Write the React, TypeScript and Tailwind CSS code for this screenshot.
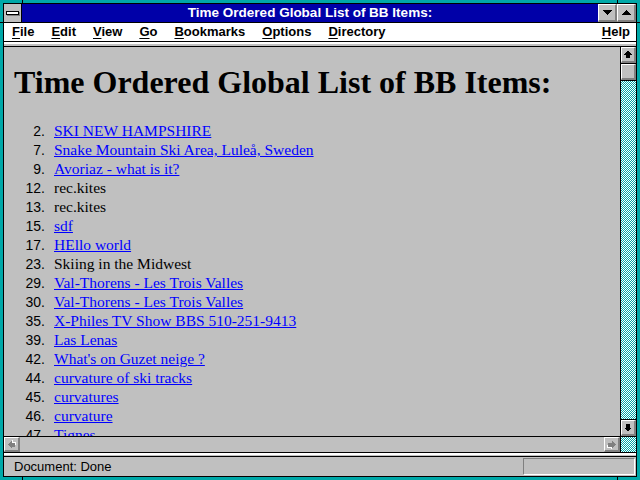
const items: { n: number; text: string; link: boolean }[] = [
  { n: 2, text: "SKI NEW HAMPSHIRE", link: true },
  { n: 7, text: "Snake Mountain Ski Area, Luleå, Sweden", link: true },
  { n: 9, text: "Avoriaz - what is it?", link: true },
  { n: 12, text: "rec.kites", link: false },
  { n: 13, text: "rec.kites", link: false },
  { n: 15, text: "sdf", link: true },
  { n: 17, text: "HEllo world", link: true },
  { n: 23, text: "Skiing in the Midwest", link: false },
  { n: 29, text: "Val-Thorens - Les Trois Valles", link: true },
  { n: 30, text: "Val-Thorens - Les Trois Valles", link: true },
  { n: 35, text: "X-Philes TV Show BBS 510-251-9413", link: true },
  { n: 39, text: "Las Lenas", link: true },
  { n: 42, text: "What's on Guzet neige ?", link: true },
  { n: 44, text: "curvature of ski tracks", link: true },
  { n: 45, text: "curvatures", link: true },
  { n: 46, text: "curvature", link: true },
  { n: 47, text: "Tignes", link: true },
];

const menus = ["File", "Edit", "View", "Go", "Bookmarks", "Options", "Directory"];

const checker =
  "bg-[image:repeating-conic-gradient(#00a8a8_0_25%,#ffffff_0_50%)] bg-[length:2px_2px]";

const bevel =
  "bg-[#c0c0c0] border-t border-l border-t-white border-l-white border-b-2 border-r-2 border-b-[#808080] border-r-[#808080]";

function Arrow({ dir, dim }: { dir: "up" | "down" | "left" | "right"; dim?: boolean }) {
  const rot = { up: 0, right: 90, down: 180, left: 270 }[dir];
  return (
    <svg width="13" height="13" viewBox="0 0 13 13" shapeRendering="crispEdges">
      <g transform={`rotate(${rot} 6.5 6.5)`}>
        {dim && (
          <polygon points="7.5,3.5 11.5,7.5 9.5,7.5 9.5,11 6.5,11 6.5,7.5 4.5,7.5" fill="#ffffff" />
        )}
        <polygon
          points="6.5,2.5 10.5,6.5 8.5,6.5 8.5,10 4.5,10 4.5,6.5 2.5,6.5"
          fill={dim ? "#808080" : "#000000"}
        />
      </g>
    </svg>
  );
}

function Tri({ down }: { down?: boolean }) {
  return (
    <svg width="9" height="5" viewBox="0 0 9 5" shapeRendering="crispEdges">
      <polygon points={down ? "0,0 9,0 4.5,5" : "0,5 9,5 4.5,0"} fill="#000" />
    </svg>
  );
}

export default function App() {
  return (
    <div className="relative w-[640px] h-[480px] bg-[#00a8a8] p-[3px] font-['Liberation_Sans',Arial,sans-serif]">
      {/* frame corner marks */}
      <div className="absolute left-[22px] top-0 w-px h-[3px] bg-black" />
      <div className="absolute right-[22px] top-0 w-px h-[3px] bg-black" />
      <div className="absolute left-[22px] bottom-0 w-px h-[3px] bg-black" />
      <div className="absolute right-[22px] bottom-0 w-px h-[3px] bg-black" />
      <div className="absolute left-0 top-[22px] w-[3px] h-px bg-black" />
      <div className="absolute right-0 top-[22px] w-[3px] h-px bg-black" />

      <div className="flex flex-col h-full border border-black bg-[#c0c0c0]">
        {/* Title bar */}
        <div className="flex h-[19px] border-b border-black shrink-0">
          <div className="w-[18px] border-r border-black bg-[#c0c0c0] flex items-center justify-center">
            <div className="w-[13px] h-[4px] bg-white border border-black shadow-[1px_1px_0_#808080]" />
          </div>
          <div className="flex-1 bg-[#0000a8] text-white font-bold text-[13.5px] leading-[18px] text-center">
            Time Ordered Global List of BB Items:
          </div>
          <div className={`w-[19px] border-l border-black flex items-center justify-center ${bevel}`}>
            <Tri down />
          </div>
          <div className={`w-[19px] border-l border-black flex items-center justify-center ${bevel}`}>
            <Tri />
          </div>
        </div>

        {/* Menu bar */}
        <div className="flex h-[18px] bg-white items-center pl-[8px] pr-[6px] gap-[17px] text-[13px] font-bold text-black shrink-0">
          {menus.map((m) => (
            <span key={m}>
              <span className="underline underline-offset-2">{m[0]}</span>
              {m.slice(1)}
            </span>
          ))}
          <span className="ml-auto">
            <span className="underline underline-offset-2">H</span>elp
          </span>
        </div>

        {/* collapsed toolbar strip */}
        <div className="h-[6px] shrink-0 border-t border-b border-black bg-[#c0c0c0]">
          <div className="h-[2px] bg-white" />
        </div>

        {/* Document area */}
        <div className="flex flex-1 min-h-0">
          <div className="flex-1 overflow-hidden bg-[#c0c0c0] pl-[10px] pt-[19px] font-['Liberation_Serif','Times_New_Roman',serif]">
            <h1 className="text-[32px] leading-[32px] font-bold text-black whitespace-nowrap">
              Time Ordered Global List of BB Items:
            </h1>
            <ol className="mt-[23px]">
              {items.map((it) => (
                <li key={it.n} className="flex items-baseline h-[19px] leading-[19px]">
                  <span className="w-[31px] text-right text-[14px] text-black font-['Liberation_Sans',Arial,sans-serif]">
                    {it.n}.
                  </span>
                  <span
                    className={`ml-[9px] text-[15.5px] whitespace-nowrap ${
                      it.link ? "text-[#0000ff] underline underline-offset-[1px]" : "text-black"
                    }`}
                  >
                    {it.text}
                  </span>
                </li>
              ))}
            </ol>
          </div>

          {/* Vertical scrollbar */}
          <div className={`w-[16px] flex flex-col border-l border-black ${checker}`}>
            <div className={`h-[16px] shrink-0 flex items-center justify-center ${bevel}`}>
              <Arrow dir="up" />
            </div>
            <div className="h-px bg-black shrink-0" />
            <div className={`h-[16px] shrink-0 ${bevel}`} />
            <div className="h-px bg-black shrink-0" />
            <div className="flex-1" />
            <div className="h-px bg-black shrink-0" />
            <div className={`h-[16px] shrink-0 flex items-center justify-center ${bevel}`}>
              <Arrow dir="down" />
            </div>
          </div>
        </div>

        {/* Horizontal scrollbar */}
        <div className="flex h-[16px] shrink-0 border-t border-black">
          <div className={`w-[16px] flex items-center justify-center border-r border-black ${bevel}`}>
            <Arrow dir="left" dim />
          </div>
          <div className="flex-1 bg-[#c0c0c0]" />
          <div className={`w-[16px] flex items-center justify-center border-l border-black ${bevel}`}>
            <Arrow dir="right" dim />
          </div>
          <div className={`w-[16px] border-l border-black ${checker}`} />
        </div>

        {/* separator */}
        <div className="h-[5px] shrink-0 border-t border-b border-black bg-[#c0c0c0]">
          <div className="h-[2px] bg-white" />
        </div>

        {/* Status bar */}
        <div className="flex h-[19px] shrink-0 items-center bg-[#c0c0c0] pl-[10px] pr-[1px]">
          <span className="text-[13px] text-black">Document: Done</span>
          <div className="ml-auto w-[112px] h-[17px] border-t border-l border-[#808080] border-b border-r border-b-white border-r-white" />
        </div>
      </div>
    </div>
  );
}
